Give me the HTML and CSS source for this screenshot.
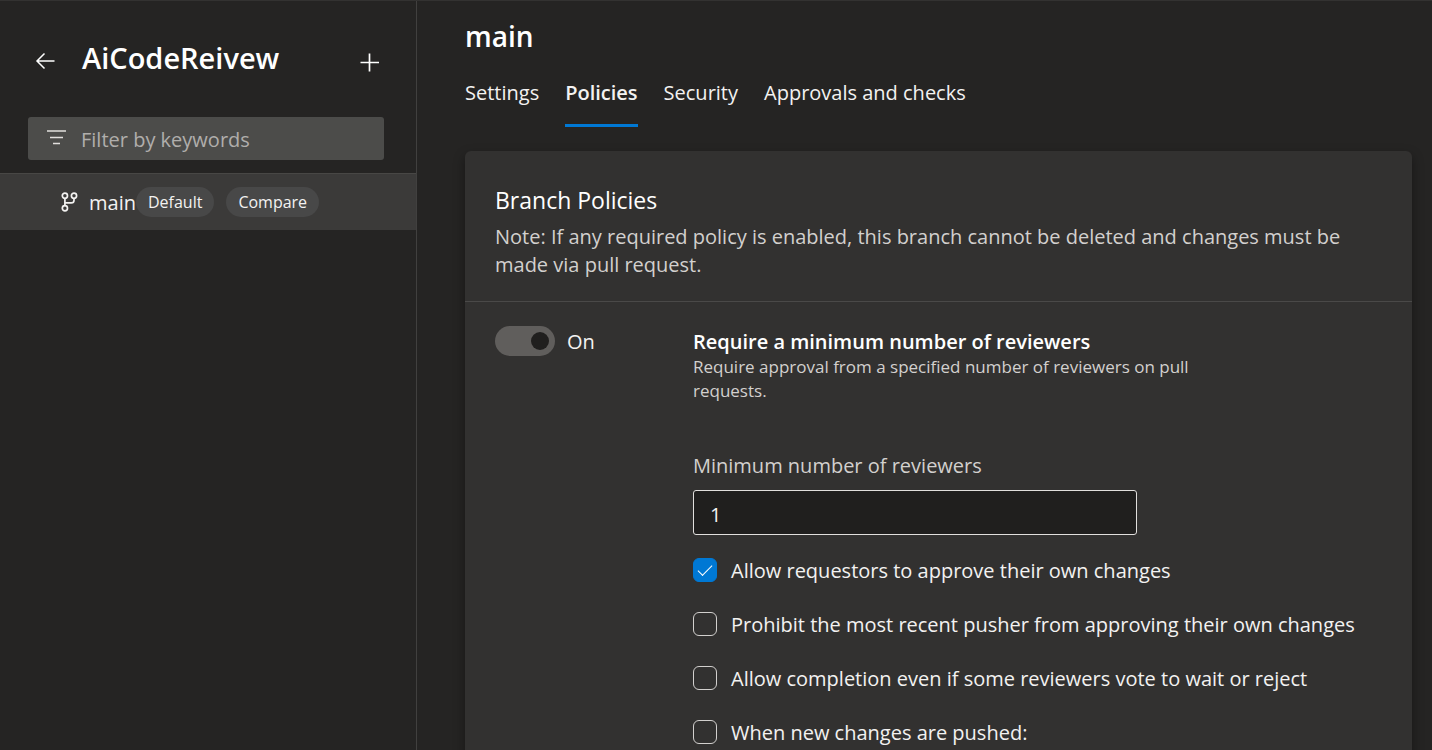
FILE: index.html
```html
<!DOCTYPE html>
<html lang="en">
<head>
<meta charset="utf-8">
<title>AiCodeReivew - Branch policies</title>
<link rel="stylesheet" href="styles.css">
</head>
<body>
<div class="app">
  <aside class="sidebar">
    <header class="sidebar-header">
      <button class="icon-button" type="button" aria-label="Back">
        <svg width="20" height="18" viewBox="0 0 20 18" fill="none" stroke="currentColor" stroke-width="1.5"><path d="M19.5 9H2M9.5 1.5L2 9L9.5 16.5"/></svg>
      </button>
      <h1 class="repo-name">AiCodeReivew</h1>
      <button class="icon-button" type="button" aria-label="Add">
        <svg width="20" height="22" viewBox="0 0 20 22" fill="none" stroke="currentColor" stroke-width="1.7"><path d="M0.5 12.5H19M9.5 3.5V21.5"/></svg>
      </button>
    </header>
    <label class="filter">
      <svg width="20" height="18" viewBox="0 0 20 18" fill="none" stroke="currentColor" stroke-width="1.4"><path d="M0 1H19M3 7.5H16M6 13.5H13"/></svg>
      <input class="filter-input" type="text" placeholder="Filter by keywords" aria-label="Filter by keywords">
    </label>
    <div class="branch">
      <svg width="18" height="20" viewBox="0 0 18 20" fill="none" stroke="currentColor" stroke-width="1.7"><circle cx="3.9" cy="3.8" r="2.6"/><circle cx="13" cy="3.8" r="2.6"/><circle cx="3.9" cy="16.2" r="2.6"/><path d="M3.9 6.4V13.6M13 6.4V8.2Q13 10.9 10.3 10.9H3.9"/></svg>
      <a class="branch-name" href="#main">main</a>
      <span class="pill">Default</span>
      <button class="pill pill-compare" type="button">Compare</button>
    </div>
  </aside>
  <main class="content" id="main">
    <h2 class="page-title">main</h2>
    <nav class="tabs">
      <a class="tab" href="#settings">Settings</a>
      <a class="tab tab-active" href="#policies" aria-current="page">Policies</a>
      <a class="tab" href="#security">Security</a>
      <a class="tab" href="#approvals">Approvals and checks</a>
    </nav>
    <section class="card">
      <header class="card-header">
        <h3 class="card-title">Branch Policies</h3>
        <p class="card-note">Note: If any required policy is enabled, this branch cannot be deleted and changes must be made via pull request.</p>
      </header>
      <div class="policy">
        <label class="switch">
          <input class="switch-input" type="checkbox" role="switch" checked>
          <span class="switch-text">On</span>
        </label>
        <div class="policy-body">
          <h4 class="policy-title">Require a minimum number of reviewers</h4>
          <p class="policy-text">Require approval from a specified number of reviewers on pull requests.</p>
          <label class="field-label" for="reviewers">Minimum number of reviewers</label>
          <input class="field" id="reviewers" type="text" inputmode="numeric" value="1">
          <div class="options">
            <label class="option"><input class="check" type="checkbox" checked><span>Allow requestors to approve their own changes</span></label>
            <label class="option"><input class="check" type="checkbox"><span>Prohibit the most recent pusher from approving their own changes</span></label>
            <label class="option"><input class="check" type="checkbox"><span>Allow completion even if some reviewers vote to wait or reject</span></label>
            <label class="option"><input class="check" type="checkbox"><span>When new changes are pushed:</span></label>
          </div>
        </div>
      </div>
    </section>
  </main>
</div>
</body>
</html>
```
FILE: styles.css
```css
* { box-sizing: border-box; }

body {
  margin: 0;
  background: #252423;
  color: #f3f2f1;
  font: 20px/28px "Open Sans", "Noto Sans", sans-serif;
}

h1, h2, h3, h4, p { margin: 0; }
a { color: inherit; text-decoration: none; }
button, input { font: inherit; color: inherit; }

.app {
  display: flex;
  height: 100vh;
  overflow: hidden;
  border-top: 1px solid #333231;
}

.sidebar {
  flex: 0 0 417px;
  border-right: 1px solid #41403f;
}

.sidebar-header {
  display: flex;
  align-items: center;
  padding: 36px 36px 0 35px;
  height: 84px;
}

.icon-button {
  display: flex;
  padding: 0;
  border: 0;
  background: none;
  color: #fff;
}

.repo-name {
  flex: 1;
  margin-left: 27px;
  padding-bottom: 6px;
  color: #fff;
  font-size: 29px;
  line-height: 40px;
  font-weight: 600;
}

.filter {
  display: flex;
  align-items: center;
  gap: 14px;
  height: 43px;
  margin: 32px 32px 13px 28px;
  padding: 0 19px;
  border-radius: 3px;
  background: #4c4c4a;
  color: #e1dfdd;
}

.filter-input {
  flex: 1;
  min-width: 0;
  padding: 2px 0 0;
  border: 0;
  outline: 0;
  background: none;
}

.filter-input::placeholder { color: #b0aeac; opacity: 1; }

.branch {
  display: flex;
  align-items: center;
  height: 57px;
  padding-left: 61px;
  border-top: 1px solid #484745;
  background: #3b3a39;
}

.branch-name {
  margin-left: 10px;
  padding-top: 2px;
}

.pill {
  height: 30px;
  padding: 0 12px;
  border: 0;
  border-radius: 15px;
  background: #484848;
  font-size: 16px;
  line-height: 30px;
}

.pill-compare { margin-left: 12px; }

.content {
  flex: 1;
  min-width: 0;
  padding: 15px 20px 0 48px;
}

.page-title {
  color: #fff;
  font-size: 28px;
  line-height: 40px;
  font-weight: 600;
}

.tabs {
  display: flex;
  gap: 26px;
  margin-bottom: 24px;
}

.tab {
  padding: 23px 0 17px;
  border-bottom: 3px solid transparent;
}

.tab-active {
  border-color: #0078d4;
  font-weight: 600;
}

.card {
  min-height: 700px;
  border-radius: 6px;
  background: #323130;
  box-shadow: 0 5px 12px rgba(0, 0, 0, 0.4);
}

.card-header {
  padding: 34px 30px 22px;
  border-bottom: 1px solid #4a4948;
}

.card-title {
  color: #fff;
  font-size: 23px;
  line-height: 30px;
  font-weight: 400;
  margin-bottom: 8px;
}

.card-note { color: #d2d0ce; }

.policy {
  display: grid;
  grid-template-columns: 198px 1fr;
  align-items: start;
  padding: 24px 30px;
}

.switch {
  display: flex;
  align-items: center;
  gap: 12px;
}

.switch-text { padding-top: 2px; }

.switch-input {
  appearance: none;
  display: flex;
  justify-content: flex-end;
  width: 60px;
  height: 30px;
  margin: 0;
  padding: 6px;
  border-radius: 15px;
  background: #605e5c;
}

.switch-input::before {
  content: "";
  width: 18px;
  height: 18px;
  border-radius: 50%;
  background: #201f1e;
}

.policy-body { padding-top: 2px; }

.policy-title {
  color: #fff;
  font-size: 20px;
  line-height: 27px;
  font-weight: 600;
}

.policy-text {
  max-width: 520px;
  color: #d2d0ce;
  font-size: 17px;
  line-height: 24px;
}

.field-label {
  display: block;
  margin: 49px 0 10px;
  color: #d2d0ce;
}

.field {
  display: block;
  width: 444px;
  max-width: 100%;
  height: 45px;
  padding: 4px 16px 0;
  border: 1px solid #e1dfdd;
  border-radius: 3px;
  background: #201f1e;
}

.options {
  display: grid;
  gap: 24px;
  margin-top: 20px;
}

.option {
  display: flex;
  align-items: center;
  gap: 14px;
}

.option span { padding-top: 2px; }

.check {
  appearance: none;
  display: grid;
  place-items: center;
  flex: none;
  width: 24px;
  height: 24px;
  margin: 0;
  border: 1px solid #d2d0ce;
  border-radius: 6px;
}

.check:checked {
  border-color: #0078d4;
  background: #0078d4;
}

.check:checked::before {
  content: "";
  width: 13px;
  height: 6px;
  margin-bottom: 4px;
  border: solid #fff;
  border-width: 0 0 1px 1px;
  transform: rotate(-45deg);
}
```
